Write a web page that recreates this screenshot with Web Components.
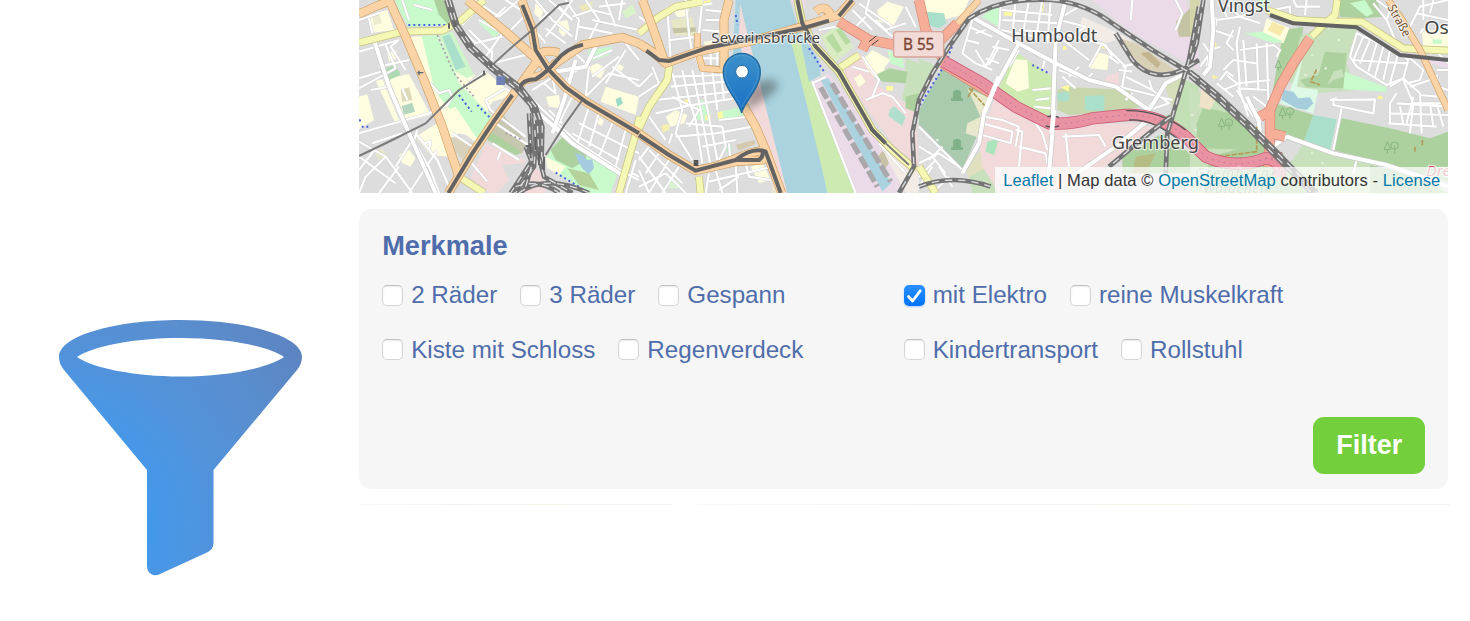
<!DOCTYPE html>
<html lang="de">
<head>
<meta charset="utf-8">
<title>Merkmale filtern</title>
<style>
html,body{margin:0;background:#fff}
body{font-family:"Liberation Sans",Arial,sans-serif;width:1470px;height:621px;overflow:hidden}
</style>
</head>
<body>
<filter-page></filter-page>
<script>
const A = 0, B = 840, C = 1680, D = 2493;
const path = (o, d, attrs) => `<path transform="translate(${o})" d="${d}" ${attrs}/>`;

/* land use: [tile offset, fill, outline] */
const areas = [
 [A,'#c8facc','M108 0H265L275 75L150 82L125 40Z'],[A,'#add19e','M225 0H265L275 80L240 45Z'],
 [A,'#fffde0','M28 45L85 30L105 90L40 98Z'],[A,'#ebebcf','M40 50L60 42L70 70L45 75Z'],
 [A,'#fffde0','M135 112L235 105L310 215L350 225L330 250L365 320L400 360L370 440L300 390L240 345L190 215Z'],
 [A,'#c8facc','M188 108L235 106L275 175L300 250L405 355L372 430L320 380L240 290L222 250Z'],
 [A,'#cdf7c9','M240 105L280 95L345 225L325 235L290 215Z'],[A,'#aae0cb','M250 110L272 102L320 200L290 210Z'],
 [A,'#fffde0','M50 242L150 222L215 345L110 372Z'],[A,'#b5d6c0','M128 318L160 308L168 335L135 344Z'],[A,'#ddd8b5','M125 270L150 262L160 300L130 305Z'],[A,'#add9b0','M80 205L110 195L125 225L90 240Z'],
 [A,'#fffde0','M0 290L25 283L45 360L0 388Z'],[A,'#fffde0','M85 160L112 150L115 175L90 185Z'],
 [A,'#fffde0','M330 255L385 218L465 285L400 305L385 335L350 300Z'],
 [A,'#fffde0','M225 345L290 320L350 410L300 400L260 430Z'],[A,'#fffde0','M170 410L235 370L270 470L215 465Z'],
 [A,'#fffde0','M120 465L150 450L170 475L155 500L130 490Z'],[A,'#e8e6c8','M48 460L70 445L80 465L60 480Z'],
 [A,'#d9d2bb','M275 410L345 430L320 490L290 455Z'],[A,'#c7c7b0','M425 335L505 430L490 460L385 415Z'],[A,'#add19e','M395 395L490 458L470 465L385 420Z'],
 [A,'#f2dada','M380 432L500 480L475 579H390L335 533Z'],[A,'#dcdcdc','M430 495L495 490L475 579H415L450 540Z'],
 [A,'#f2dada','M515 500L555 520L560 579H500Z'],
 [A,'#c8facc','M562 470L610 408L775 522L755 579H690L590 520Z'],[A,'#add19e','M575 450L610 412L685 455L680 480L640 505L590 480Z'],[A,'#b5d29b','M625 505L690 520L720 570L660 555Z'],
 [A,'#a6cbe0','M648 460L672 465L685 480L700 478L705 505L690 522L672 508L660 490Z'],[A,'#fffde0','M560 470L620 500L600 525L565 505Z'],
 [A,'#c8facc','M360 70L375 58L428 95L405 112Z'],[A,'#fffde0','M530 10L555 25L545 58L525 40Z'],[A,'#fffde0','M600 65L625 60L632 90L612 110L600 95Z'],
 [A,'#d9f2c8','M790 35L820 12L832 40L800 55Z'],[A,'#c8facc','M690 150L760 140L750 165L680 190Z'],[A,'#fffde0','M690 200L715 190L740 205L725 235L700 225Z'],
 [A,'#fffde0','M560 290L600 285L605 325L570 320Z'],[A,'#fffde0','M740 260L840 290L830 345L725 305Z'],[A,'#9edcc7','M770 298L785 290L792 310L775 320Z'],
 [A,'#fffde0','M710 345L735 360L728 378L712 370Z'],[A,'#fffde0','M775 190L795 200L785 215L770 205Z'],[A,'#ece9b9','M660 18L700 5L700 28L670 35Z'],

 [B,'#aad3df','M290 0H452L480 90L500 250L565 579H435L340 290L280 190Z'],
 [B,'#f2dada','M303 10L345 180L445 579H418L330 310L300 100Z'],
 [B,'#cdebb0','M455 120L485 130L510 230L575 400L655 579H566L505 320Z'],
 [B,'#aad3df','M480 90L540 180L545 225L510 245L490 150Z'],
 [B,'#ebdbe8','M520 245L570 220L720 410L800 560L790 579H650Z'],
 [B,'#ebdbe8','M455 0H500L490 70Z'],
 [B,'#aad3df','M545 240L568 235L757 550L730 574Z'],
 [B,'#c6c3a8','M715 470L735 450L750 490L735 510Z'],
 [B,'#f2dada','M600 210L665 160L720 260L830 330L840 500L760 430Z'],[B,'#f3ece6','M720 430L840 510V579H800Z'],
 [B,'#d9ebc2','M545 110L595 75L645 140L585 190Z'],[B,'#b5dba0','M560 115L580 100L610 150L595 160Z'],[B,'#b5dba0','M590 90L605 85L635 125L620 135Z'],
 [B,'#fffde0','M715 30L745 5L795 20L765 75L720 65Z'],[B,'#fffde0','M670 180L700 150L755 180L735 205L745 225L705 230L685 205Z'],
 [B,'#c8facc','M745 150L790 170L795 205L755 190Z'],[B,'#c8e0bb','M800 175L840 190V330L790 300L800 240Z'],[B,'#add19e','M710 225L750 205L805 215L800 250L730 245Z'],[B,'#add19e','M800 290L840 280V340L800 325Z'],
 [B,'#b0dfce','M752 330L765 318L800 350L790 378L748 348Z'],[B,'#fffde0','M645 235L665 222L680 245L660 262Z'],[B,'#fffaa0','M742 258H762V272H742Z'],
 [B,'#e7e6c5','M95 60L160 50L165 75L175 110L110 105Z'],[B,'#c4c3a3','M100 85L170 82V95L105 100Z'],[B,'#fffde0','M100 28L150 22L148 48L115 52Z'],
 [B,'#fffde0','M80 350L110 330L145 345L135 370L95 380Z'],[B,'#c8facc','M172 310L190 298L200 325L215 335L208 362L175 360Z'],[B,'#c8facc','M238 335L325 318L320 345L240 362Z'],[B,'#d4c9ac','M290 435L345 420L350 432L300 452Z'],
 [B,'#fffaa0','M235 338L250 333L252 355L238 358Z'],[B,'#fffaa0','M200 345H215V360H198Z'],[B,'#fffaa0','M135 300L150 296L152 310L138 312Z'],[B,'#f5efb0','M68 375L92 372L90 390L70 398Z'],
 [B,'#b9ebc8','M262 440L280 438L278 455L262 458Z'],[B,'#fffde0','M335 500L372 490L395 540L360 550Z'],[B,'#d8f5d0','M85 545L120 540L125 565L90 565Z'],[B,'#ede4d4','M395 510L415 510L425 579H400Z'],
 [B,'#fffde0','M195 125L230 120L238 145L200 150Z'],[B,'#fffaa0','M175 5L215 0L215 12L180 15Z'],[B,'#c8facc','M330 472L360 456L366 472L340 480Z'],

 [C,'#fffde0','M10 0H150L130 45L70 60L20 40Z'],[C,'#aae0cb','M20 35L75 40L82 70L60 85L25 75Z'],[C,'#c8e0bb','M0 175L45 195L30 250L0 290Z'],
 [C,'#c8facc','M190 50L235 10L248 18L245 85Z'],
 [C,'#aacbae','M75 195L215 285L200 320L190 370L130 510L0 375V330Z'],[C,'#e8e8cc','M145 265L215 295L185 415L140 400L145 370L185 350Z'],[C,'#e0e0c0','M140 510L185 450L205 460L195 525L150 540Z'],[C,'#c8e0bb','M150 530L230 490L240 579H160Z'],
 [C,'#f2dada','M230 290L390 375L640 370L720 385L600 480L390 579H240L190 500L180 420Z'],[C,'#f2dada','M560 230L600 215V255L560 245Z'],
 [C,'#cdebb0','M290 155L400 230L400 345L340 345L235 275Z'],[C,'#fffde0','M288 178L325 180L330 265L295 275L260 250Z'],[C,'#c8d6ab','M415 270L440 260L630 270L665 320L600 335L450 345L415 330Z'],
 [C,'#aae0cb','M498 288L556 286V332H498Z'],[C,'#aae0cb','M415 280L450 275V303H415Z'],[C,'#fffde0','M530 155L570 165L565 210L512 205Z'],
 [C,'#ebdbe8','M520 0H800L840 160V210L750 160L620 85Z'],[C,'#f3ece6','M490 50L600 100L770 210L680 220L590 120L560 130L480 90Z'],[C,'#d9d0b8','M590 110L650 130L770 210L690 225Z'],
 [C,'#c4b48f','M665 160L690 155L725 190L715 205Z'],[C,'#d4dfb7','M735 250L785 235L800 250L760 320Z'],[C,'#c2dfb5','M760 340L800 240L840 260V450L720 350Z'],
 [C,'#add19e','M610 470L730 400L840 480V520H610Z'],[C,'#b7bb84','M650 470L710 460L680 520H640Z'],
 [C,'#c4c3a3','M770 65L840 0V110H780Z'],[C,'#aae5bb','M205 425L240 415L225 465L200 455Z'],[C,'#fffa9e','M255 35L280 33V47H255Z'],[C,'#fffa9e','M365 8L375 10L372 38L362 36Z'],[C,'#fffa9e','M432 138H442V150H432Z'],[C,'#fffa9e','M425 262L450 255V275Z'],[C,'#fffa9e','M535 140L560 137V148Z'],

 [D,'#c8e0bb','M0 260L80 300L280 460L340 579H0Z'],[D,'#add19e','M40 320L160 350L215 430L225 450L20 445L20 370Z'],[D,'#eee3c8','M35 255L80 295L60 330L28 320Z'],
 [D,'#add19e','M280 90L340 80L330 170L270 230L245 290Z'],[D,'#c8e0bb','M330 110L430 60L500 85L470 190L500 270L380 280L300 250Z'],
 [D,'#add19e','M405 155L470 160L460 265L350 262L330 240L385 225Z'],[D,'#c8e0bb','M412 255L430 215L455 208L462 230L430 240Z'],
 [D,'#fffde0','M215 110L230 55L298 85L280 130Z'],[D,'#f7e9a9','M232 90L248 65L285 82L270 108Z'],[D,'#c8facc','M165 100L215 95L280 125L250 130Z'],[D,'#c8facc','M465 215L590 262V275L460 268Z'],
 [D,'#dcfae5','M340 165L300 270L270 310L370 340L385 270L320 260Z'],[D,'#a6cddb','M280 270L310 275L325 295L360 292L370 310L350 330L320 325L275 300Z'],
 [D,'#add19e','M255 310L370 345L340 430L290 420L255 390Z'],[D,'#aae0cb','M370 345L440 358L420 452L340 428Z'],[D,'#add19e','M455 355L600 385L720 415L774 395V545L430 450Z'],
 [D,'#c8e0bb','M340 435L430 465L540 490L540 579H310L290 500Z'],[D,'#add19e','M60 470L210 430L300 500L390 579H40Z'],[D,'#add19e','M540 495L660 520L774 579H540Z'],[D,'#add19e','M445 0H560L580 50L520 55L450 50Z'],[D,'#c8facc','M480 10L525 0L550 40L530 50Z'],
 [D,'#c8facc','M205 0H240V30H205Z'],[D,'#fffde0','M695 95L774 85V140H700Z'],[D,'#c8facc','M728 118H755V132H728Z'],[D,'#ebdbe8','M715 180H774V205L720 190Z'],
 [D,'#d5d5ac','M0 0H30L20 70L0 110Z'],[D,'#fff39c','M565 286L580 290L575 298L562 296Z'],[D,'#fff39c','M75 125L82 140L75 145Z'],[D,'#fff39c','M65 225L85 232L70 238Z']
];

/* streets grouped by class */
const minor = [
 [A,'M0 155L120 120M45 110L80 250L130 370L210 500L240 579M120 120L95 140L140 210M80 135L110 205L0 265M60 200L150 180M35 270L90 260M0 235L65 215'],
 [A,'M0 60L60 40M30 55L40 100M130 0L150 60M0 425L80 470L160 579M50 445L0 510M80 470L20 530L0 579M120 500L60 579M0 470L110 550M40 430L130 400M160 420L110 500M170 400L235 480L270 560M195 430L215 425L210 450M235 450L150 579M175 390L160 440'],
 [A,'M0 400L120 365L210 340L265 315L280 290L270 270L240 280L215 250M130 265L145 300M130 360L180 450L230 579'],
 [A,'M165 15L220 30M300 90L380 200M310 75L345 40M330 90L400 160L395 195M345 130L430 110M400 150L395 205M380 170L430 100L360 60M400 190L500 165M280 60L350 130'],
 [A,'M380 215L330 250M380 300L440 265L460 280M380 300L395 330L500 410M410 370L530 450M280 400L340 440M400 430L480 480M425 455L415 480M330 480L385 545'],
 [A,'M345 0L420 50L480 0M400 60L440 20M440 0L500 40M450 95L500 45M530 0L580 60L640 110M540 60L600 20L640 60M570 0L640 60M520 80L560 130M560 85L620 130M560 110L600 60L640 0M620 0L660 60L650 120M680 0L720 60L690 120M700 60L840 90M740 0L770 80M790 0L780 60M640 50L700 30L760 45M660 80L760 100M720 20L800 10'],
 [A,'M640 150L690 200L680 290M620 240L690 180L760 150M700 230L780 170M740 250L800 150M760 200L840 260M800 130L840 180M680 290L750 220L840 240M620 240L640 290L600 370M500 280L600 375M520 270L600 220M580 230L590 280L555 250M570 330L610 370'],
 [A,'M600 375L660 430L800 520L840 540M600 380L620 410M690 320L655 430M720 340L690 440M760 370L720 470M800 390L770 500M660 370L800 440M640 400L780 480M800 440L840 460M830 480L800 579M820 520L840 530'],
 [B,'M85 20L95 180M140 0L150 100L160 160M190 0L180 100M100 30L220 10M95 120L180 110M0 50L40 80M200 30L250 35M200 60L250 60M190 90L250 95M170 170L180 200M195 150L240 160M215 160V195M235 160V195M190 175H240'],
 [B,'M100 220L130 330L110 400L160 480M130 210L150 300L170 360L190 490M160 210L185 330L215 500M190 215L200 300L235 480M220 215L235 330M245 210L255 300M100 230L255 225M95 260L260 245M50 300L280 275M50 340L140 320M130 320L320 290M110 410L230 400M240 360L330 350M140 370L250 380M100 400L90 430M30 350L80 420M250 380L260 440L240 480M190 440L290 420M230 400L340 380M150 380L180 330L100 290M0 260L40 220M0 290L60 250M40 200L60 250'],
 [B,'M0 470L80 579M0 510L30 579M30 440L0 480M60 460L20 520M90 480L30 579M120 500L70 579M0 560L80 520L140 579M30 450L130 550M60 440L110 480M210 520L200 579M230 510L250 579M290 490L295 579M320 490L330 530L395 540M210 545L400 500M240 570L300 530M270 430L275 490'],
 [B,'M520 250L560 230M520 245L650 579M720 430L800 520M640 30L700 90M660 10L760 80M680 50L640 90L660 100M710 60L740 90L800 70M690 0L680 40L760 110M800 20L830 80M670 170L720 240L700 290M680 300L730 280L760 290L800 340M640 200L690 215M540 90L590 80'],
 [C,'M160 60L130 160L170 190L220 210M150 80L220 110M140 120L180 130M170 100L200 90M170 150L200 200M220 140L270 150M200 175L240 190M210 195L240 140M240 120L200 200M245 20L240 90M290 0L280 100M330 0L310 110M370 0L350 120M395 0L385 130M250 30L400 45M250 60L430 70M300 90L430 100M245 90L350 110M420 60L500 80L470 100M430 100L560 135L580 170M430 50L480 20M420 110L510 180M510 200L550 130L620 200L610 260M570 170L600 190M610 200L650 190M600 210L640 215M620 230L700 270'],
 [C,'M330 155L380 170M380 170L370 210M300 150L270 200M340 270L395 265M350 300L390 295M345 320L395 325M420 210L500 240M430 230L470 265M450 230L480 200M500 240L520 220M600 260L640 270L760 300M700 270L750 310L690 330M690 240L700 270M740 250L680 330M640 280L620 300M770 0L790 40L770 90M640 0L635 60'],
 [C,'M195 350L250 360L300 380L290 440M190 370L280 395L275 430L190 405M290 390L310 395L300 500M300 440L380 460M350 370L370 400L385 450M440 400L450 500M430 410L540 405L560 440M380 460L385 490'],
 [C,'M0 380L60 440L130 510M30 480L70 440M40 470L80 520M0 490L60 460L120 500M0 530L50 480M40 500L0 560M90 530L40 579M60 500L100 560M0 440L50 470'],
 [D,'M60 35L80 60L65 130L50 200M80 60L150 50L200 30M90 0L110 50M110 10L150 50L210 70M70 90L130 110M130 90L110 130L130 150M90 140L60 150M100 210L130 180L200 190M90 240L110 215L130 230M150 80L140 130L150 260M160 120L170 260M200 130L205 270M230 130L235 300M150 150L250 135L270 150L260 170M110 225L140 250L240 240M150 265L230 270M100 270L150 250M80 250L130 290M145 260L175 350M190 290L230 320M140 270L190 350M165 310L200 330M40 130L60 160L30 200'],
 [D,'M310 0L320 20L390 20M350 0L345 45M250 30L300 20L300 50M550 10L590 60L620 130M590 60L600 30L560 0M630 60L640 110M660 80L690 20L774 0M680 40L774 60M700 0V60M730 0L720 40M700 85L690 100M720 160L774 150M740 225L745 260L774 270M740 210H774M735 150L774 190'],
 [D,'M500 100L480 170L500 200L590 255L640 235L655 180L630 160ZM520 110L490 180M540 120L510 190M560 130L535 215M580 140L555 230M600 150L580 240M625 160L600 250M485 180L650 190M600 260L640 235L690 280L695 400M620 280L600 310L600 370M650 250L690 240L700 210L655 170M660 260L720 240M690 285L740 290M640 240L670 310L660 400M620 310L774 320M600 340L774 345M595 370L740 380M720 310L730 380M740 310L760 380M630 320L640 375M670 310L774 310M670 290L650 370'],
 [D,'M430 300L555 298L550 340L430 315ZM455 325L430 450M500 480L490 520M420 300L440 295']
];
const medium = [
 [A,'M45 120L90 260L150 400L230 579M580 400L615 300L650 180M540 340L640 430L790 525M560 220L680 200L720 120M590 380L640 430'],
 [C,'M165 55L290 125L410 190L510 240L590 260L690 330M300 130L240 240L195 340L180 430L130 520M440 0L410 120L405 250L400 400L385 579M700 350L590 440L460 530M690 330L740 250L790 225'],
 [D,'M65 0L70 90L60 200L40 225M205 350L210 400L255 435L290 410L430 460L590 495L774 560M170 290L205 360']
];
const yellow = [
 [A,'M0 128L130 95L250 92L305 62L375 0'],[A,'M842 350L825 420L780 579'],[A,'M300 530L375 579'],
 [B,'M0 100L60 50L110 20L190 5'],[B,'M92 190L85 240L30 320L0 385'],[B,'M180 530L185 579'],[B,'M590 212L660 165'],
 [C,'M0 500L50 579'],[D,'M230 30L320 60L410 65L515 65L640 145L774 152'],[D,'M442 0L435 45L405 70L365 110']
];
const tramStreet = [[B,'M475 0L490 70L530 140L600 215L700 390L760 450L830 510']];
const orange = [
 [A,'M0 42L60 15L100 0'],[A,'M90 0L140 110L195 240L250 380L300 530'],[A,'M325 0L440 95L530 175L565 205'],[A,'M488 0L520 90L530 150L565 205L620 262L680 305L840 400'],
 [A,'M540 175L480 260L400 370L340 460L268 579'],[A,'M500 240L550 225L590 190L670 135L790 112L840 130'],[A,'M525 175Q545 145 600 158'],
 [B,'M10 0L40 80L75 180'],[B,'M0 130L40 155L80 190L175 155L330 125L490 80L600 45L640 0'],[B,'M270 0L255 60V205'],
 [B,'M0 400L90 465L170 512L290 485L370 480L375 450L330 460L240 495'],[B,'M310 310L350 380L380 450L428 579'],[B,'M530 35Q560 10 575 45Q560 65 545 50']
];
const orangeNarrow = [[B,'M255 210L190 205L175 150V100'],[C,'M90 100L125 60L180 0'],[D,'M595 0L630 50L690 150L774 330']];
const salmon = [[B,'M600 65L690 120L770 135'],[B,'M690 110L670 150'],[C,'M0 0L20 90L80 190'],[C,'M60 125L115 70'],[C,'M70 190L225 285'],[D,'M360 115L310 190L270 260L240 330L240 400L235 500'],[D,'M245 330L210 350'],[D,'M245 400L285 410']];
const trunk = [[C,'M75 185L190 250L290 320L390 370Q450 375 520 355L620 345Q720 340 800 410L860 470Q950 510 1040 475L1090 475M1040 475Q1090 480 1080 530']];
const rail = [
 [A,'M262 0L285 75L330 145L395 205L470 265L515 315L535 370L540 470'],[A,'M272 0L295 75L340 140L405 200L485 262L530 320L550 380L548 470'],[A,'M510 340L515 440L520 480L455 579'],[A,'M540 470L555 530L640 579'],[A,'M480 579Q560 520 690 579'],[A,'M500 560L520 490L500 440'],[A,'M470 560Q540 535 600 579'],[A,'M525 350L530 430L525 500L470 579'],
 [C,'M400 0Q500 10 580 70L700 150L840 235'],[C,'M400 0Q250 -10 150 55L90 140L40 220L0 300L-20 400L-15 500L-60 579'],[C,'M590 100L640 180Q700 250 790 210L840 180'],[C,'M840 20L810 180L790 250L745 400L740 520'],[C,'M755 350L690 400L570 500'],[C,'M0 560Q100 520 215 560'],
 [D,'M40 0L20 130L0 190'],[D,'M0 215L90 290L170 365L240 435L380 579'],[D,'M0 228L90 305L170 380L240 452L365 579']
];
const tram = [
 [A,'M490 15L520 90L530 150L565 205L620 262L680 305L840 400'],[A,'M485 260Q490 240 530 238Q560 220 590 185Q620 145 672 134',],[A,'M460 285L400 370L340 460L268 579'],
 [B,'M22 152L60 180L90 183L200 145L490 85L570 62M600 48L640 0'],[B,'M0 405L90 465L170 512L290 480Q340 440 380 455L425 579'],[B,'M290 480L360 480Q375 470 370 450'],
 [B,'M475 0L490 70L530 140L600 215L700 390L740 430'],[D,'M240 45L310 70L500 82L630 165L774 180']
];
const thin = [[A,'M0 468L100 420L200 370L250 320L300 270L380 220'],[A,'M400 195L460 140L520 90L600 15L630 8'],[A,'M560 465L620 370L670 300'],[B,'M740 430L810 495']];

const stroke = (list, w, color, extra='') => list.map(([o,d]) => path(o, d, `fill="none" stroke="${color}" stroke-width="${w}" stroke-linejoin="round" ${extra}`)).join('');
const cased = (list, w, color, edge, c=4) => stroke(list, w + c, edge) + stroke(list, w, color);

const tree = (x,y) => path(D, `M${x} ${y}l-10 24h20zm0 24v12M${x+22} ${y+12}m-11 0a11 11 0 1 0 22 0a11 11 0 1 0 -22 0m11 0v24`, 'fill="none" stroke="#86b57f" stroke-width="3"');
const dots = [[1700,260],[1715,220],[1735,420],[2500,345],[2510,390],[2500,430],[2840,130],[2860,165],[2875,210],[2910,85],[2940,120],[2840,225],[2900,205],[2860,460],[2890,490],[2920,460]]
  .map(([x,y]) => `<circle cx="${x}" cy="${y}" r="4" fill="#e4efd9"/>`).join('');
const grave = (x,y) => path(C, `M${x} ${y}q12 -12 24 0v20h6v8h-36v-8h6z`, 'fill="#7fb289"');
const label = (x,y,size,len,t,extra='') => `<text x="${x}" y="${y}" font-size="${size}" textLength="${len}" lengthAdjust="spacingAndGlyphs" ${extra}>${t}</text>`;

class CityMap extends HTMLElement {
  constructor(){
    super();
    this.attachShadow({mode:'open'}).innerHTML = `
<style>
:host{display:grid;height:193px;overflow:hidden;background:#e0dfdf}
svg,.credit{grid-area:1/1}
svg{display:block;width:1089px;height:193px}
.tiles{filter:blur(1.2px)}
text{font-family:"Noto Sans","DejaVu Sans",sans-serif;fill:#444;stroke:#ffffffa8;stroke-width:7;paint-order:stroke;stroke-linejoin:round}
.credit{align-self:end;justify-self:end;z-index:1;box-sizing:border-box;width:453px;height:26px;padding:0 8px;background:#ffffffb8;color:#333;font-size:16.5px;letter-spacing:.09px;line-height:27px;white-space:nowrap;text-align:right}
a{color:#0078a8;text-decoration:none}
</style>
<svg viewBox="0 0 3267 579" preserveAspectRatio="none">
<defs><linearGradient id="pin" x2="0" y2="1"><stop stop-color="#3d91cb"/><stop offset="1" stop-color="#176fc3"/></linearGradient>
<filter id="soft" x="-50%" y="-50%" width="200%" height="200%"><feGaussianBlur stdDeviation="13"/></filter></defs>
<g class="tiles">
<rect width="3267" height="579" fill="#dddddd"/>
${areas.map(([o,f,d]) => path(o,d,`fill="${f}"`)).join('')}
${stroke([[B,'M545 262L715 560'],[B,'M578 250L755 545']],16,'#aaa8aa','stroke-dasharray="38 10"')}
${dots}${grave(102,275)}${grave(102,422)}${tree(95,355)}${tree(278,322)}${tree(592,425)}${path(D,'M265 180l-9 22h18zm0 22v10','fill="none" stroke="#86b57f" stroke-width="3"')}
${stroke(minor,9,'#cfcfcf')}${stroke(minor,6.5,'#fff')}
${cased(medium,12,'#fff','#c9c9c9')}
${stroke([[A,'M148 75H270M300 285L338 335M355 315L400 360M590 518L690 579'],[C,'M125 70L80 190L0 320'],[B,'M290 45L296 75M510 145L555 215'],[C,'M340 195L390 220']],6,'#4a63df','stroke-dasharray="6 9"')}
${stroke([[A,'M160 92L265 88M235 105L285 220L345 290M440 400L490 420'],[A,'M105 15L135 85']],5,'#a99aa8','stroke-dasharray="6 8"')}
${stroke([[C,'M150 265L200 320M165 260L145 295'],[D,'M380 208L362 245L390 255M85 470L200 455V380M697 420V440M675 440V455']],5,'#b59a55','stroke-dasharray="16 4"')}
${cased(yellow,19,'#f5f7b5','#c4c17c')}
${cased(tramStreet,20,'#f5f7b5','#b9b66b')}
${cased(orangeNarrow,17,'#fad3a6','#cfa163')}
${cased(orange,23,'#fad3a6','#cfa163')}
${cased(salmon,27,'#f7ae98','#d58672')}
${cased(trunk,32,'#e892a2','#cc5c78',5)}
${stroke(trunk,3,'#b3749d','stroke-dasharray="4 14"')}
${path(C,'M385 350q15 -5 35 2M380 378q20 6 40 0M622 332Q720 330 800 390M630 360Q700 355 780 420','fill="none" stroke="#555" stroke-width="4"')}
${stroke([[C,'M240 230L195 340M405 330L398 400']],14,'#fff')}
${stroke(thin,6,'#7c7c7c')}
${stroke(rail,14,'#747474')}${stroke(rail,4,'#dedede','stroke-dasharray="22 18"')}
${stroke(tram,12,'#636363')}
${path(A,'M500 438h12m0 -8v16M540 455v40M515 430v45M530 410v40M555 470v40M270 70v16M288 65v16M375 212v14M395 190v14M485 255v14','stroke="#666" stroke-width="6" fill="none"')}
${path(A,'M412 229h26v26h-26z','fill="#7080b5"')}${path(A,'M175 218h18M180 212v14','stroke="#567" stroke-width="4"')}
${path(B,'M690 125L712 108M698 135L718 120','stroke="#444" stroke-width="3"')}
${path(B,'M164 480h14v18h-14z','fill="#555"')}
${path(A,'M0 360l12 5M8 380l22 0','stroke="#4a63df" stroke-width="6" stroke-dasharray="6 8"')}
</g>
<rect x="1604" y="95" width="150" height="76" rx="10" fill="#f2dad6" stroke="#d8a599" stroke-width="4"/>
<text x="1632" y="150" font-size="46" textLength="94" lengthAdjust="spacingAndGlyphs" style="fill:#7d4634;stroke:#7d4634;stroke-width:1">B 55</text>
${label(1057,128,45,326,'Severinsbrücke')}
${label(1957,126,54,258,'Humboldt')}
${label(2258,448,54,262,'Gremberg')}
${label(2577,37,52,156,'Vingst')}
${label(3196,101,52,74,'Os')}
<text transform="translate(3085,22) rotate(61)" font-size="36" textLength="104" lengthAdjust="spacingAndGlyphs" style="fill:#705033">Straße</text>
${label(3202,527,44,72,'Dre','style="fill:#d2485c;font-style:italic"')}
<text font-size="42" opacity=".5" style="fill:#667766;font-style:italic"><tspan x="2508" y="535" textLength="270">Gremberger</tspan><tspan x="2532" y="580" textLength="195">Wäldchen</tspan></text>
<path d="M1150 335L1175 262Q1225 220 1258 252Q1256 285 1150 335Z" fill="#333" opacity=".42" filter="url(#soft)"/>
<path d="M1148 339C1142 306 1093 265 1093 216A55.500 56 0 0 1 1204 216C1204 265 1155 306 1148 339Z" fill="url(#pin)" stroke="#23699d" stroke-width="4"/>
<path d="M1148 322C1137 292 1098 256 1098 216A50 50 0 0 1 1198 216C1198 256 1160 292 1148 322Z" fill="none" stroke="#69aede" stroke-width="2.500" opacity=".5"/>
<circle cx="1149" cy="215" r="19" fill="#fff" stroke="#2b6f9f" stroke-width="3"/>
</svg>
<div class="credit"><a>Leaflet</a> | Map data © <a>OpenStreetMap</a> contributors - <a>License</a></div>`;
  }
}
customElements.define('city-map', CityMap);

customElements.define('funnel-icon', class extends HTMLElement {
  constructor(){
    super();
    this.attachShadow({mode:'open'}).innerHTML = `
<style>:host{display:block;width:244px;height:256px}svg{display:block}</style>
<svg width="244" height="256" viewBox="0 0 244 256">
<defs><radialGradient id="g" gradientUnits="userSpaceOnUse" cx="-10" cy="205" r="315"><stop stop-color="#4299ea"/><stop offset=".33" stop-color="#4498e8"/><stop offset=".42" stop-color="#4b96e3"/><stop offset=".55" stop-color="#5292da"/><stop offset=".75" stop-color="#5a8ecf"/><stop offset="1" stop-color="#5d83bf"/></radialGradient></defs>
<path fill="url(#g)" fill-rule="evenodd" d="M121.500 0C188 0 243 16 243 37Q243 44 238 50L154.500 150V223Q154.500 229 149 232L101 254Q96 256.500 92 254Q88 251.500 88 246V150L5 50Q0 44 0 37C0 16 55 0 121.500 0ZM18 37C34 48 75 56.500 121.500 56.500S209 48 225 37C209 26 168 18 121.500 18S34 26 18 37Z"/></svg>`;
  }
});

customElements.define('feature-check', class extends HTMLElement {
  constructor(){
    super();
    this.attachShadow({mode:'open'}).innerHTML = `
<style>
:host{display:flex;align-items:center;color:#4f6dab;font-size:24.200px;line-height:32px;white-space:nowrap}
.box{box-sizing:border-box;width:21px;height:21px;margin:0 8px 0 0;border:1px solid #d6d6d6;border-top-color:#c0c0c0;border-radius:5px;background:#fff;box-shadow:inset 0 1px 2px #00000014}
svg{display:none}
:host([checked]) .box{border:0;background:linear-gradient(#2a90ff,#0073ff);box-shadow:0 1px 2px #0073ff50}
:host([checked]) svg{display:block}
</style>
<span class="box"><svg width="21" height="21" viewBox="0 0 21 21"><path d="M4.500 11.500L8.600 16L16.200 5.800" fill="none" stroke="#fff" stroke-width="2.800" stroke-linecap="round" stroke-linejoin="round"/></svg></span><slot></slot>`;
  }
});

customElements.define('filter-panel', class extends HTMLElement {
  constructor(){
    super();
    this.attachShadow({mode:'open'}).innerHTML = `
<style>
:host{display:flex;flex-direction:column;box-sizing:border-box;height:280px;padding:21px 23px 15px;border-radius:12px;background:#f6f6f6}
h2{margin:0;color:#4f6dab;font-size:27.200px;line-height:32px}
.grid{display:grid;grid-template-columns:521.500px 1fr;row-gap:22.500px;margin-top:17px}
.row{display:flex;gap:23px}
button{align-self:flex-end;margin:auto 0 0;width:112px;height:57px;border:0;border-radius:11px;background:#73cf3b;color:#fff;font:bold 27px "Liberation Sans",Arial,sans-serif;padding:0}
</style>
<h2>Merkmale</h2>
<div class="grid">
<div class="row"><feature-check>2 Räder</feature-check><feature-check>3 Räder</feature-check><feature-check>Gespann</feature-check></div>
<div class="row"><feature-check checked>mit Elektro</feature-check><feature-check>reine Muskelkraft</feature-check></div>
<div class="row"><feature-check>Kiste mit Schloss</feature-check><feature-check>Regenverdeck</feature-check></div>
<div class="row"><feature-check>Kindertransport</feature-check><feature-check>Rollstuhl</feature-check></div>
</div>
<button>Filter</button>`;
  }
});

customElements.define('filter-page', class extends HTMLElement {
  constructor(){
    super();
    this.attachShadow({mode:'open'}).innerHTML = `
<style>
:host{display:grid;grid-template-columns:359.200px 1089px;height:621px;background:#fff}
aside{padding:319.500px 0 0 58.500px}
main{display:flex;flex-direction:column}
filter-panel{margin-top:16px}
.edge{display:grid;grid-template-columns:313px 755px;gap:23px;margin-top:15px}
.edge i{height:1px;background:linear-gradient(90deg,#fafafa,#f1f3f1 30%,#f4f4ec 60%,#f1f4f3)}
</style>
<aside><funnel-icon></funnel-icon></aside>
<main><city-map></city-map><filter-panel></filter-panel><div class="edge"><i></i><i></i></div></main>`;
  }
});
</script>
</body>
</html>
